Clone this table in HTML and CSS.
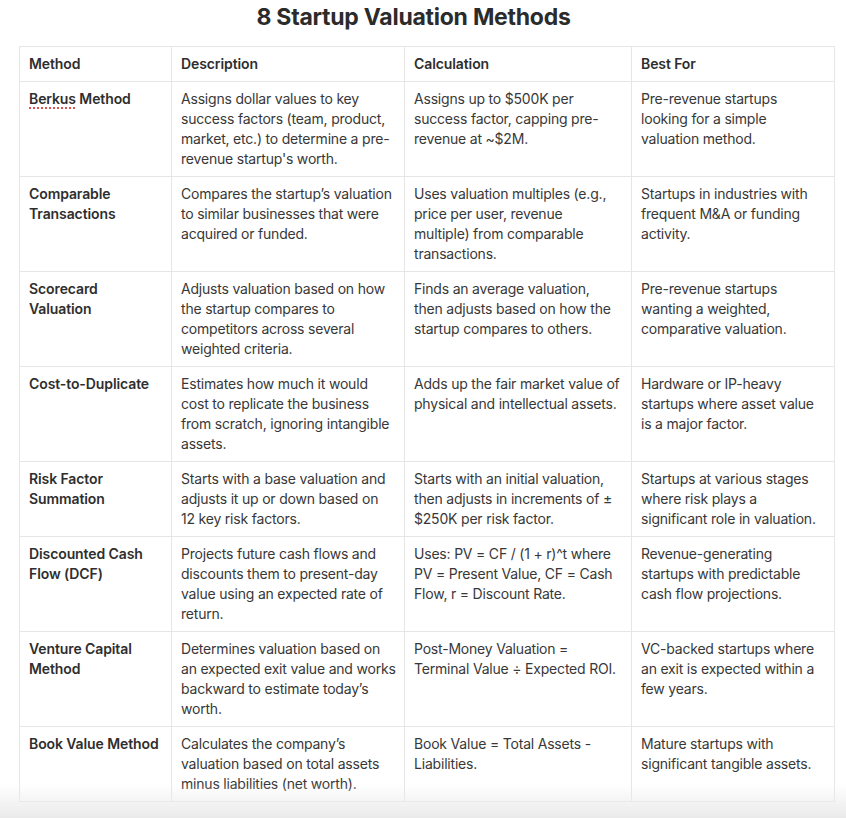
FILE: index.html
```html
<!DOCTYPE html>
<html lang="en">
<head>
<meta charset="utf-8">
<title>8 Startup Valuation Methods</title>
<link rel="stylesheet" href="styles.css">
</head>
<body>
<main class="page">
  <h1 class="title">8 Startup Valuation Methods</h1>
  <table class="grid">
    <colgroup>
      <col class="c1"><col class="c2"><col class="c3"><col class="c4">
    </colgroup>
    <thead>
      <tr><th>Method</th><th>Description</th><th>Calculation</th><th>Best For</th></tr>
    </thead>
    <tbody>
      <tr>
        <td class="name"><span class="spell">Berkus</span> Method</td>
        <td>Assigns dollar values to key<br>success factors (team, product,<br>market, etc.) to determine a pre-<br>revenue startup's worth.</td>
        <td>Assigns up to $500K per<br>success factor, capping pre-<br>revenue at ~$2M.</td>
        <td>Pre-revenue startups<br>looking for a simple<br>valuation method.</td>
      </tr>
      <tr>
        <td class="name">Comparable<br>Transactions</td>
        <td>Compares the startup’s valuation<br>to similar businesses that were<br>acquired or funded.</td>
        <td>Uses valuation multiples (e.g.,<br>price per user, revenue<br>multiple) from comparable<br>transactions.</td>
        <td>Startups in industries with<br>frequent M&amp;A or funding<br>activity.</td>
      </tr>
      <tr>
        <td class="name">Scorecard<br>Valuation</td>
        <td>Adjusts valuation based on how<br>the startup compares to<br>competitors across several<br>weighted criteria.</td>
        <td>Finds an average valuation,<br>then adjusts based on how the<br>startup compares to others.</td>
        <td>Pre-revenue startups<br>wanting a weighted,<br>comparative valuation.</td>
      </tr>
      <tr>
        <td class="name">Cost-to-Duplicate</td>
        <td>Estimates how much it would<br>cost to replicate the business<br>from scratch, ignoring intangible<br>assets.</td>
        <td>Adds up the fair market value of<br>physical and intellectual assets.</td>
        <td>Hardware or IP-heavy<br>startups where asset value<br>is a major factor.</td>
      </tr>
      <tr>
        <td class="name">Risk Factor<br>Summation</td>
        <td>Starts with a base valuation and<br>adjusts it up or down based on<br>12 key risk factors.</td>
        <td>Starts with an initial valuation,<br>then adjusts in increments of ±<br>$250K per risk factor.</td>
        <td>Startups at various stages<br>where risk plays a<br>significant role in valuation.</td>
      </tr>
      <tr>
        <td class="name">Discounted Cash<br>Flow (DCF)</td>
        <td>Projects future cash flows and<br>discounts them to present-day<br>value using an expected rate of<br>return.</td>
        <td>Uses: PV = CF / (1 + r)^t where<br>PV = Present Value, CF = Cash<br>Flow, r = Discount Rate.</td>
        <td>Revenue-generating<br>startups with predictable<br>cash flow projections.</td>
      </tr>
      <tr>
        <td class="name">Venture Capital<br>Method</td>
        <td>Determines valuation based on<br>an expected exit value and works<br>backward to estimate today’s<br>worth.</td>
        <td>Post-Money Valuation =<br>Terminal Value ÷ Expected ROI.</td>
        <td>VC-backed startups where<br>an exit is expected within a<br>few years.</td>
      </tr>
      <tr>
        <td class="name">Book Value Method</td>
        <td>Calculates the company’s<br>valuation based on total assets<br>minus liabilities (net worth).</td>
        <td>Book Value = Total Assets -<br>Liabilities.</td>
        <td>Mature startups with<br>significant tangible assets.</td>
      </tr>
    </tbody>
  </table>
</main>
<div class="fade"></div>
</body>
</html>
```

FILE: styles.css
```css
html, body {
  margin: 0;
  padding: 0;
  background: #ffffff;
}

body {
  font-family: Inter, "Noto Sans", sans-serif;
  color: #333333;
  overflow: hidden;
  height: 818px;
}

.page {
  padding: 2px 0 0 19px;
}

.title {
  margin: 0 0 14px 0;
  width: 815px;
  padding-right: 26px;
  box-sizing: border-box;
  text-align: center;
  font-size: 23px;
  line-height: 30px;
  font-weight: 700;
  color: #2b2b2b;
  letter-spacing: -0.25px;
}

.grid {
  border-collapse: collapse;
  table-layout: fixed;
  width: 815px;
  font-size: 14px;
  line-height: 20px;
}

.c1 { width: 152px; }
.c2 { width: 233px; }
.c3 { width: 227px; }
.c4 { width: 203px; }

.grid th,
.grid td {
  border: 1px solid #e6e6e6;
  padding: 7px 9px 7px 9px;
  text-align: left;
  vertical-align: top;
  color: #383838;
  font-weight: 400;
  letter-spacing: -0.2px;
  white-space: nowrap;
}

.grid th {
  font-weight: 600;
  color: #2e2e2e;
  letter-spacing: -0.1px;
}

.grid td.name {
  font-weight: 600;
  color: #2e2e2e;
  letter-spacing: -0.1px;
}

.spell {
  text-decoration: underline dotted #d9534f;
  text-decoration-thickness: 1.5px;
  text-underline-offset: 3px;
}

.fade {
  position: fixed;
  left: 0;
  right: 0;
  bottom: 0;
  height: 34px;
  background: linear-gradient(to bottom, rgba(236,236,236,0) 0%, rgba(236,236,236,0.5) 45%, rgba(234,234,234,1) 100%);
  pointer-events: none;
}
```
